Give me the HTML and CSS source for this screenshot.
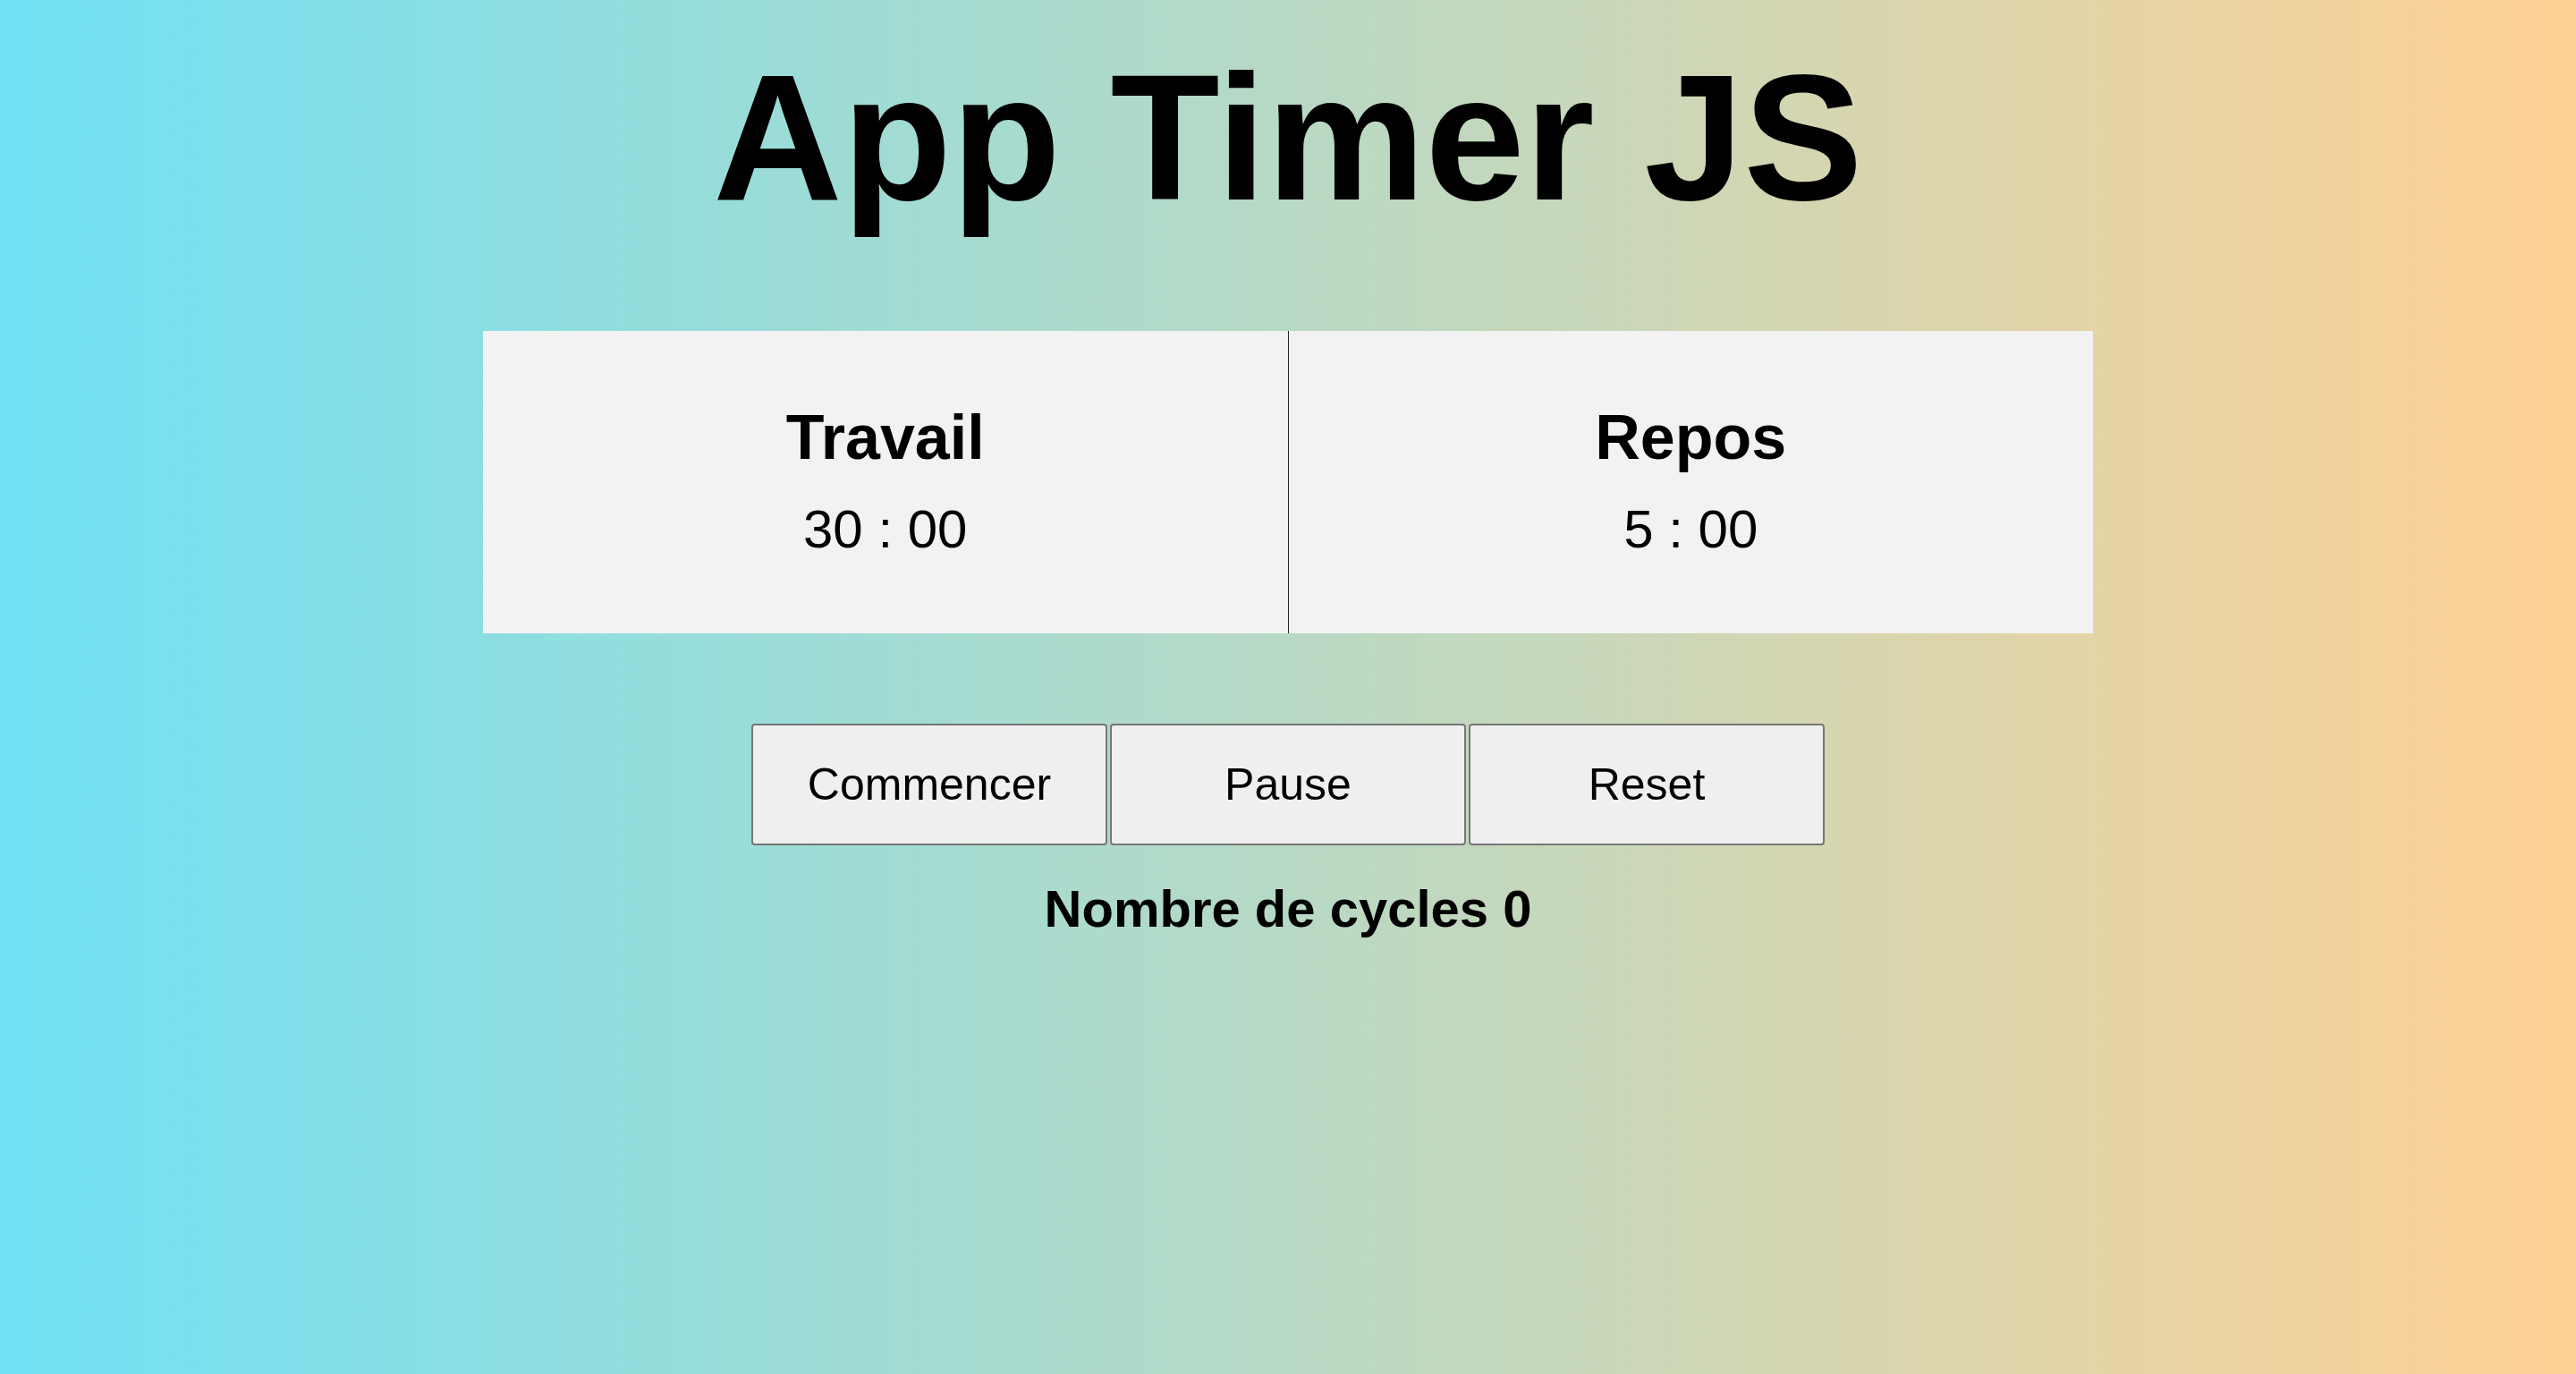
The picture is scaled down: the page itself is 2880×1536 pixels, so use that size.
FILE: index.html
```html
<!DOCTYPE html>
<html lang="fr">
<head>
<meta charset="utf-8">
<title>App Timer JS</title>
<link rel="stylesheet" href="styles.css">
</head>
<body>
<main class="app">
  <h1 class="title">App Timer JS</h1>
  <section class="timers">
    <div class="timer timer-work">
      <h2 class="timer-label">Travail</h2>
      <p class="timer-value">30 : 00</p>
    </div>
    <div class="timer">
      <h2 class="timer-label">Repos</h2>
      <p class="timer-value">5 : 00</p>
    </div>
  </section>
  <div class="controls">
    <button class="btn">Commencer</button>
    <button class="btn">Pause</button>
    <button class="btn">Reset</button>
  </div>
  <p class="cycles">Nombre de cycles 0</p>
</main>
</body>
</html>
```
FILE: styles.css
```css
html, body {
  margin: 0;
  padding: 0;
}
body {
  min-height: 100vh;
  background: linear-gradient(to right, #70e1f5, #ffd194);
  font-family: "Liberation Sans", Arial, sans-serif;
  color: #000;
}
.app {
  display: flex;
  flex-direction: column;
  align-items: center;
}
.title {
  margin: 40px 0 0;
  font-size: 200px;
  line-height: 227px;
  font-weight: 700;
}
.timers {
  margin-top: 103px;
  width: 1800px;
  height: 338px;
  display: flex;
  background: #f2f2f2;
}
.timer {
  flex: 1;
  display: flex;
  flex-direction: column;
  align-items: center;
  padding-top: 79px;
}
.timer-work {
  border-right: 1px solid #222;
}
.timer-label {
  margin: 0;
  font-size: 70px;
  line-height: 80px;
  font-weight: 700;
}
.timer-value {
  margin: 30px 0 0;
  font-size: 60px;
  line-height: 66px;
}
.controls {
  margin-top: 101px;
  display: flex;
  gap: 3px;
}
.btn {
  width: 398px;
  height: 136px;
  background: #efefef;
  border: 2px solid #767676;
  border-radius: 4px;
  font-family: "Liberation Sans", Arial, sans-serif;
  font-size: 50px;
  color: #000;
  padding: 0;
}
.cycles {
  margin: 39px 0 0;
  font-size: 58px;
  line-height: 64px;
  font-weight: 700;
}
```
